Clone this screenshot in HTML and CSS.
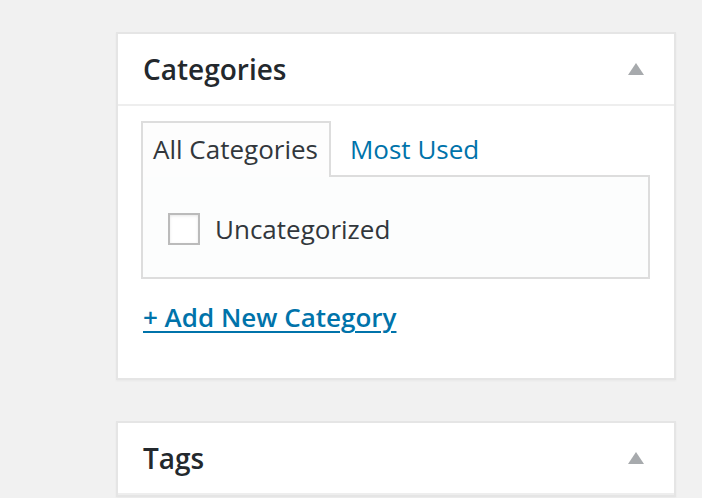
FILE: index.html
```html
<!DOCTYPE html>
<html lang="en">
<head>
    <meta charset="UTF-8">
    <meta name="viewport" content="width=device-width, initial-scale=1.0">
    <title>Post Categories</title>
    <link rel="stylesheet" href="styles.css">
</head>
<body>

    <div class="sidebar">

        <div class="postbox">
            <div class="hndle">
                <h2>Categories</h2>
                <span class="toggle"></span>
            </div>
            <div class="inside">
                <ul class="tabs">
                    <li class="tab active">All Categories</li>
                    <li class="tab"><a href="#">Most Used</a></li>
                </ul>
                <div class="panel">
                    <label class="cat">
                        <span class="check"></span>
                        Uncategorized
                    </label>
                </div>
                <a class="add-new" href="#">+ Add New Category</a>
            </div>
        </div>

        <div class="postbox">
            <div class="hndle">
                <h2>Tags</h2>
                <span class="toggle"></span>
            </div>
        </div>

    </div>

</body>
</html>
```

FILE: styles.css
```css
body {
    background-color: #f1f1f1;
    margin: 0;
    font-family: "Open Sans", "Noto Sans", sans-serif;
    color: #32373c;
}

.sidebar {
    padding: 32px 0 0 116px;
    width: 560px;
}

.postbox {
    background-color: #fff;
    border: 2px solid #e5e5e5;
    box-shadow: 0 1px 2px rgba(0, 0, 0, 0.04);
    margin-bottom: 41px;
}

.hndle {
    display: flex;
    align-items: center;
    justify-content: space-between;
    height: 70px;
    padding: 0 30px 0 25px;
    border-bottom: 2px solid #eee;
}

.hndle h2 {
    margin: 0;
    font-size: 28px;
    font-weight: 600;
    color: #23282d;
}

.toggle {
    width: 0;
    height: 0;
    border-left: 8px solid transparent;
    border-right: 8px solid transparent;
    border-bottom: 12px solid #a7aaad;
}

.inside {
    padding: 15px 24px 0 23px;
    height: 257px;
}

.tabs {
    display: flex;
    gap: 7px;
    list-style: none;
    margin: 0;
    padding: 0;
    position: relative;
    z-index: 1;
}

.tab {
    font-size: 26px;
    line-height: 52px;
    padding: 0 11px 0 10px;
    border: 2px solid transparent;
    border-bottom: none;
}

.tab a {
    color: #0073aa;
    text-decoration: none;
}

.tab.active {
    border-color: #ddd;
    background-color: #fdfdfd;
    margin-bottom: -2px;
    padding-bottom: 2px;
}

.panel {
    border: 2px solid #ddd;
    background-color: #fcfdfd;
    height: 96px;
    padding: 4px 24px 0 25px;
    display: flex;
    align-items: center;
}

.cat {
    display: flex;
    align-items: center;
    gap: 15px;
    font-size: 26px;
    color: #32373c;
}

.check {
    width: 28px;
    height: 28px;
    border: 2px solid #bbb;
    background-color: #fff;
    box-shadow: inset 0 1px 3px rgba(0, 0, 0, 0.1);
}

.add-new {
    display: inline-block;
    margin: 21px 0 0 2px;
    font-size: 26px;
    line-height: 34px;
    font-weight: 600;
    color: #0073aa;
    text-decoration: underline;
    text-decoration-thickness: 2px;
    text-underline-offset: 4px;
}
```
